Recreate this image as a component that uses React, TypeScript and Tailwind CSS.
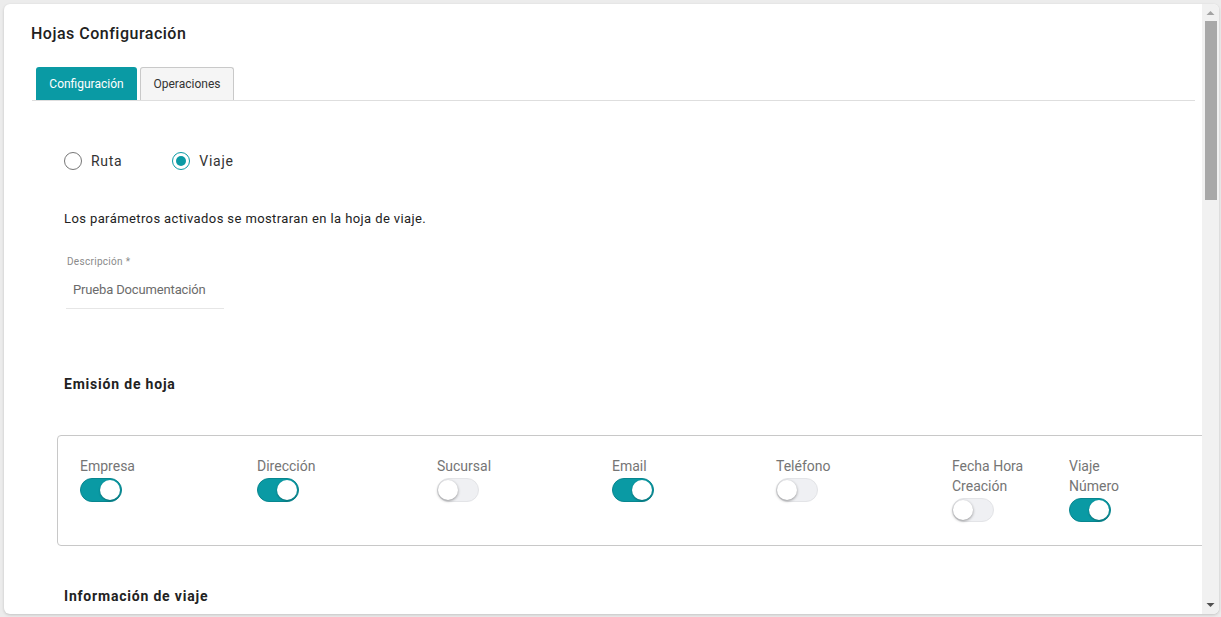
import React from "react";

function Toggle({ on }: { on: boolean }) {
  return on ? (
    <div className="relative h-[24px] w-[42px] rounded-full bg-[#0a9aa4] border border-[#08868f]">
      <div className="absolute right-[1px] top-[1px] h-[20px] w-[20px] rounded-full bg-white shadow-[0_1px_2px_rgba(0,0,0,0.3)]" />
    </div>
  ) : (
    <div className="relative h-[24px] w-[42px] rounded-full bg-[#eff0f3] border border-[#e3e4e7]">
      <div className="absolute left-[0px] top-[1px] h-[20px] w-[20px] rounded-full bg-white shadow-[0_1px_3px_rgba(0,0,0,0.4)]" />
    </div>
  );
}

const items: { label: React.ReactNode; on: boolean; w: string }[] = [
  { label: "Empresa", on: true, w: "w-[177px]" },
  { label: "Dirección", on: true, w: "w-[180px]" },
  { label: "Sucursal", on: false, w: "w-[175px]" },
  { label: "Email", on: true, w: "w-[164px]" },
  { label: "Teléfono", on: false, w: "w-[176px]" },
  { label: <>Fecha Hora<br />Creación</>, on: false, w: "w-[117px]" },
  { label: <>Viaje<br />Número</>, on: true, w: "w-[90px]" },
];

export default function App() {
  return (
    <div
      className="h-[617px] w-[1221px] overflow-hidden bg-[#ececec] pl-[4px] pt-[4px]"
      style={{ fontFamily: "Roboto, 'Noto Sans', sans-serif" }}
    >
      <div className="flex h-[610px] w-[1215px] overflow-hidden rounded-[6px] bg-white shadow-[0_1px_3px_rgba(0,0,0,0.18)]">
        <div className="flex-1 overflow-hidden pt-[20px]">
          <div className="pl-[27px] text-[16px] leading-[20px] font-medium tracking-[0.5px] text-[#212121]">
            Hojas Configuración
          </div>
          <div className="ml-[28px] mt-[23px] flex w-[1163px] border-b border-[#dedede]">
            <div className="ml-[4px] flex h-[33px] w-[101px] items-center justify-center rounded-t-[3px] bg-[#0a9aa4] text-[12px] text-white">
              Configuración
            </div>
            <div className="ml-[3px] flex h-[33px] w-[94px] items-center justify-center rounded-t-[3px] border border-b-0 border-[#c9c9c9] bg-[#f5f5f5] text-[12px] text-[#333]">
              Operaciones
            </div>
          </div>

          <div className="ml-[60px] mt-[51px] flex h-[18px] items-center text-[14px] tracking-[0.7px] text-[#333]">
            <div className="h-[18px] w-[18px] rounded-full border border-[#777]" />
            <span className="ml-[9px]">Ruta</span>
            <div className="ml-[50px] flex h-[18px] w-[18px] items-center justify-center rounded-full border-[1.5px] border-[#0a9aa4]">
              <div className="h-[10px] w-[10px] rounded-full bg-[#0a9aa4]" />
            </div>
            <span className="ml-[9px]">Viaje</span>
          </div>

          <div className="ml-[60px] mt-[41px] text-[13px] leading-[16px] tracking-[0.4px] text-[#222]">
            Los parámetros activados se mostraran en la hoja de viaje.
          </div>

          <div className="ml-[62px] mt-[29px] w-[158px] border-b border-[#e6e6e6] pb-[10px]">
            <div className="pl-[1px] text-[10px] leading-[12px] tracking-[0.3px] text-[#8a8a8a]">
              Descripción *
            </div>
            <div className="mt-[14px] pl-[7px] text-[13px] leading-[16px] tracking-[-0.15px] text-[#6b6b6b]">
              Prueba Documentación
            </div>
          </div>

          <div className="ml-[60px] mt-[66px] text-[14px] leading-[18px] font-bold tracking-[0.8px] text-[#222]">
            Emisión de hoja
          </div>

          <div className="ml-[53px] mt-[42px] flex h-[111px] w-[1170px] rounded-[4px] border border-[#c8c8c8] pl-[22px] pt-[20px]">
            {items.map((it, i) => (
              <div key={i} className={`${it.w} shrink-0`}>
                <div className="text-[14px] leading-[20px] text-[#757575]">{it.label}</div>
                <div className="mt-[2px]">
                  <Toggle on={it.on} />
                </div>
              </div>
            ))}
          </div>

          <div className="ml-[60px] mt-[41px] text-[14px] leading-[18px] font-bold tracking-[0.8px] text-[#222]">
            Información de viaje
          </div>
        </div>

        <div className="flex w-[17px] shrink-0 flex-col items-center bg-[#f1f1f1]">
          <svg width="9" height="6" viewBox="0 0 9 6" className="mt-[6px]">
            <polygon points="4.5,1 8.5,5 0.5,5" fill="#a3a3a3" />
          </svg>
          <div className="mt-[5px] h-[179px] w-[12px] bg-[#a8a8a8]" />
          <div className="flex-1" />
          <svg width="9" height="6" viewBox="0 0 9 6" className="mb-[6px]">
            <polygon points="0.5,1 8.5,1 4.5,5" fill="#505050" />
          </svg>
        </div>
      </div>
    </div>
  );
}
